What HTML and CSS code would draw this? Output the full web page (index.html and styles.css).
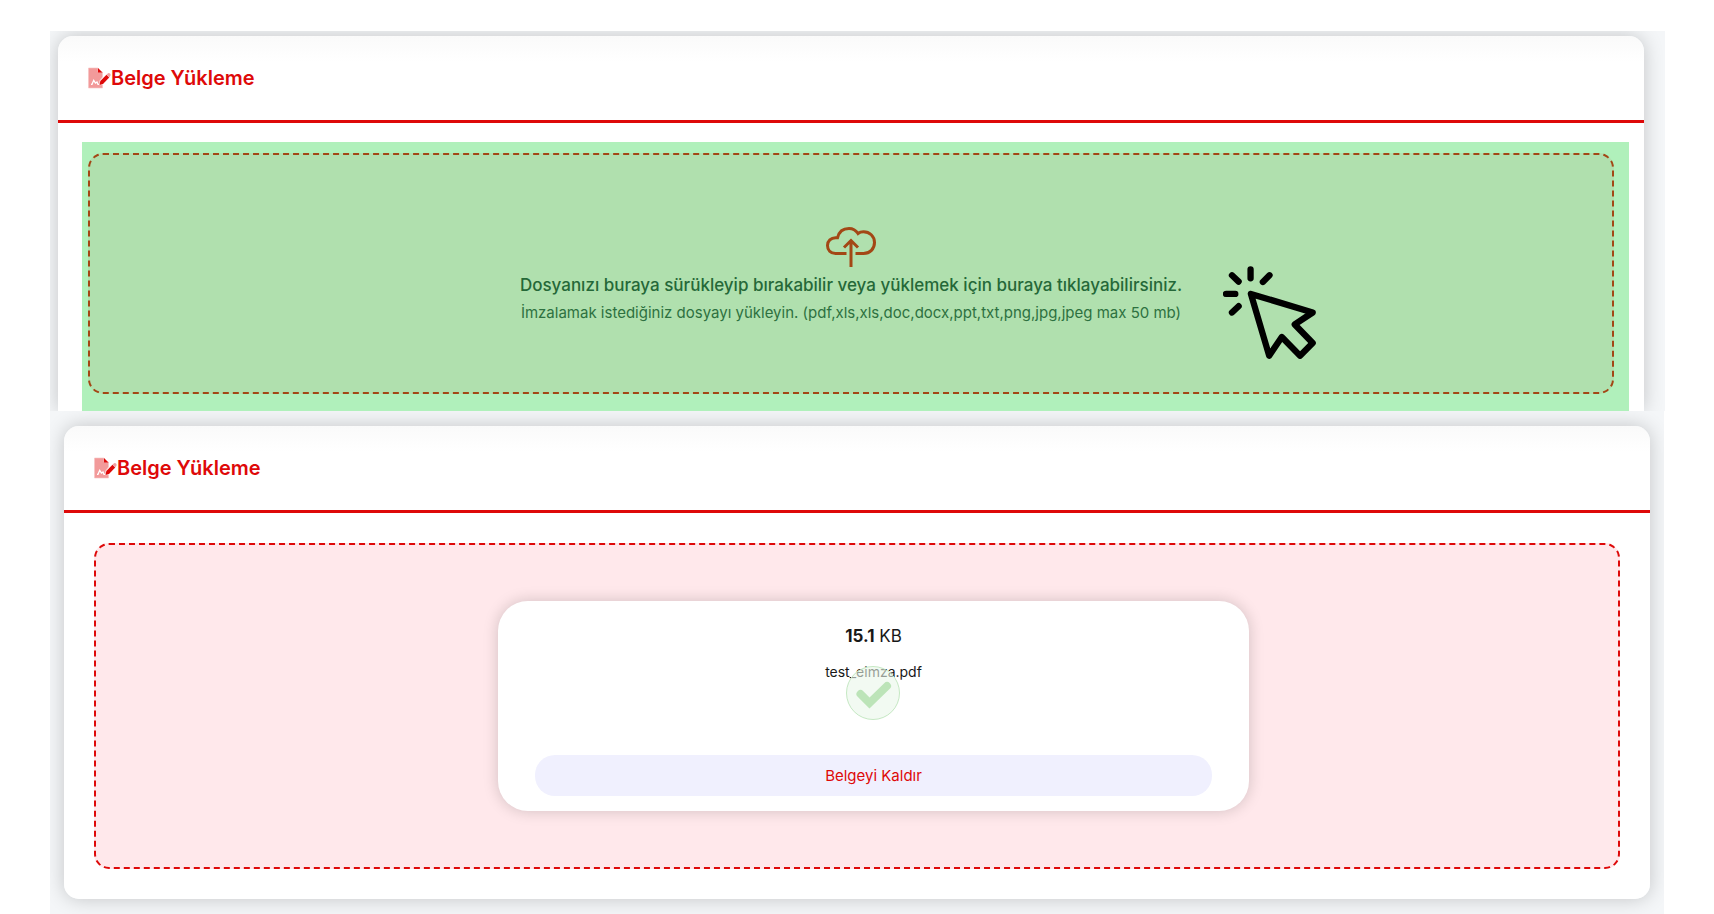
FILE: index.html
```html
<!DOCTYPE html>
<html lang="tr">
<head>
<meta charset="utf-8">
<title>Belge Yükleme</title>
<link rel="stylesheet" href="styles.css">
</head>
<body>
<svg class="sprite" aria-hidden="true">
  <symbol id="file-sign" viewBox="0 0 24 22">
    <path d="M.5 1h9.500v4h4.500v5l-3 4v4h3v3H.5z" fill="#f29a9a" stroke="#f7c4c4" stroke-width=".6"/>
    <path d="M10 1v4.500h4.500z" fill="#de0909"/>
    <path d="M3 17.300h1l1.700-4 1.800 2.700 1.500-1 1 2.300h2" fill="none" stroke="#fff" stroke-width="1.300"/>
    <path d="M11.500 18l.8-4 6.200-6.200 2.700 2.700-6.200 6.500z" fill="#de0909"/>
    <path d="M18.500 7.800l1.500-1.500q1-.8 2 .2t.4 2.300l-1.200 1.700z" fill="#f0a0a0"/>
  </symbol>
</svg>

<main class="page">
  <section class="panel panel-select">
    <div class="card card-open">
      <header class="card-header">
        <svg class="title-icon" aria-hidden="true"><use href="#file-sign"/></svg>
        <h2 class="card-title">Belge Yükleme</h2>
      </header>
      <div class="select-body">
        <div class="highlight">
          <label class="dropzone dropzone-empty" for="document">
            <input class="file-input" id="document" type="file">
            <svg class="cloud-icon" viewBox="0 0 50 40" fill="none" stroke="#a34715" stroke-width="3" aria-hidden="true">
              <path d="M20.500 26.500H9.500C4.500 26.500 1.500 23 1.500 18.500S5 10.800 9.500 10.800h2C13 4.500 17 1.500 23 1.500c4 0 7 2 9 5 1.500-1.200 3.500-1.800 5.500-1.800 6 0 11 4.500 11 10.800S44 26.500 37.500 26.500H29.500"/>
              <path d="M25 40V13M18 20.500l7-7 7 7"/>
            </svg>
            <span class="drop-title">Dosyanızı buraya sürükleyip bırakabilir veya yüklemek için buraya tıklayabilirsiniz.</span>
            <span class="drop-hint">İmzalamak istediğiniz dosyayı yükleyin. (pdf,xls,xls,doc,docx,ppt,txt,png,jpg,jpeg max 50 mb)</span>
            <svg class="cursor-icon" viewBox="0 0 280 280" fill="none" stroke="#000" stroke-width="19" stroke-linecap="round" stroke-linejoin="round" aria-hidden="true">
              <path d="M84 84l186 56-54 36 54 56-38 38-55-56-38 56z"/>
              <path d="M83 10v27M27 28l20 19M140 28l-20 20M9 84h28M47 121l-20 19"/>
            </svg>
          </label>
        </div>
      </div>
    </div>
  </section>

  <section class="panel panel-result">
    <div class="card">
      <header class="card-header">
        <svg class="title-icon" aria-hidden="true"><use href="#file-sign"/></svg>
        <h2 class="card-title">Belge Yükleme</h2>
      </header>
      <div class="result-body">
        <div class="dropzone dropzone-filled">
          <article class="file-card">
            <p class="file-size"><strong>15.1</strong> KB</p>
            <p class="file-name">test_eimza.pdf</p>
            <button class="remove-button" type="button">Belgeyi Kaldır</button>
            <svg class="check-icon" viewBox="0 0 54 54" fill="none" aria-hidden="true">
              <circle cx="27" cy="27" r="26.500" fill="#eaf7e9" fill-opacity=".6" stroke="#c5e8c3"/>
              <path d="M14.500 28l9 9L41 20" stroke="#bce4b8" stroke-width="8" stroke-linecap="round"/>
            </svg>
          </article>
        </div>
      </div>
    </div>
  </section>
</main>
</body>
</html>
```
FILE: styles.css
```css
* {
  box-sizing: border-box;
}

body {
  margin: 0;
  background: #fff;
  color: #181818;
  font-family: Inter, Roboto, sans-serif;
}

.sprite {
  display: none;
}

.page {
  padding: 31px 49px 0 50px;
}

.panel {
  overflow: hidden;
  background: #f4f6f8;
}

.panel-select {
  padding: 5px 21px 0 8px;
}

.panel-result {
  margin-right: 1px;
  padding: 15px 14px;
}

.card {
  border-radius: 15px;
  background: linear-gradient(#fafafa, #fff 26px);
  box-shadow: 0 0 20px rgba(0, 0, 0, 0.2);
}

.card-open {
  border-radius: 15px 15px 0 0;
}

.card-header {
  display: flex;
  align-items: center;
  height: 87px;
  padding: 0 29px 0 30px;
  border-bottom: 3px solid #de0909;
}

.title-icon {
  width: 24px;
  height: 22px;
  margin-right: -1px;
}

.card-title {
  margin: 0;
  color: #de0909;
  font-size: 20px;
  font-weight: 600;
  line-height: 24px;
}

.select-body {
  padding: 19px 15px 0 24px;
}

.highlight {
  padding: 11px 15px 17px 6px;
  background: #b0f0bb;
}

.dropzone {
  border: 2px dashed #de0909;
  border-radius: 15px;
}

.dropzone-empty {
  position: relative;
  display: flex;
  flex-direction: column;
  align-items: center;
  padding: 72px 16px 68px;
  border-color: #a34715;
  background: #b0e0ae;
  cursor: pointer;
}

.file-input {
  position: absolute;
  width: 1px;
  height: 1px;
  opacity: 0;
}

.cloud-icon {
  width: 50px;
  height: 40px;
}

.drop-title {
  margin-top: 6px;
  color: #256838;
  font-size: 17px;
  font-weight: 500;
  line-height: 25px;
}

.drop-hint {
  margin-top: 4px;
  color: #2d7140;
  font-size: 15px;
  line-height: 22px;
}

.cursor-icon {
  position: absolute;
  top: 111px;
  left: calc(50% + 372px);
  width: 93px;
  height: 93px;
}

.result-body {
  padding: 30px;
}

.dropzone-filled {
  display: flex;
  justify-content: center;
  padding: 56px 0 56px 33px;
  background: #ffe8eb;
}

.file-card {
  position: relative;
  display: flex;
  flex-direction: column;
  align-items: center;
  width: 751px;
  padding: 23px 37px 15px;
  border-radius: 30px;
  background: #fff;
  box-shadow: 0 0 15px rgba(0, 0, 0, 0.18);
}

.file-size {
  margin: 0;
  font-size: 17px;
  line-height: 24px;
}

.file-name {
  margin: 14px 0 0;
  font-size: 14px;
  line-height: 20px;
}

.check-icon {
  position: absolute;
  top: 65px;
  left: calc(50% - 28px);
  width: 54px;
  height: 54px;
}

.remove-button {
  align-self: stretch;
  height: 41px;
  margin-top: 73px;
  padding: 0;
  border: 0;
  border-radius: 20px;
  background: #f0f0fe;
  color: #de0909;
  font-family: inherit;
  font-size: 15px;
}
```
